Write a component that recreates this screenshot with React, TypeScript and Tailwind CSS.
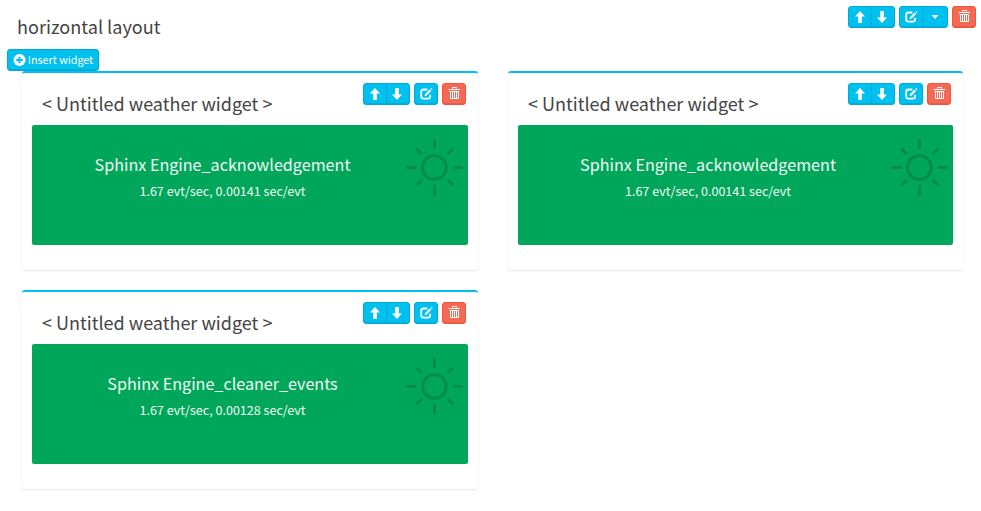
import type { ReactNode } from "react";

const font = "font-['Noto_Sans_CJK_SC','Noto_Sans',sans-serif]";

function Arrow({ down = false }: { down?: boolean }) {
  return (
    <svg width="12" height="12" viewBox="0 0 12 12" className={down ? "rotate-180" : ""}>
      <path d="M6 0L11 5.5H7.8V12H4.2V5.5H1Z" fill="white" />
    </svg>
  );
}

function Edit() {
  return (
    <svg width="13" height="12" viewBox="0 0 13 12" fill="none">
      <path d="M7.4 1.5H3.6Q1.2 1.5 1.2 3.9V8.3Q1.2 10.7 3.6 10.7H7.7Q10.1 10.7 10.1 8.3V6.8" stroke="white" strokeWidth="1.8" />
      <path d="M4.5 8.1L5.2 5.9L9.6 1.5L11.1 3L6.7 7.4Z" fill="white" />
      <path d="M10.4 0.8L11.1 0.1L12.6 1.6L11.9 2.3Z" fill="white" />
    </svg>
  );
}

function Trash() {
  return (
    <svg width="12" height="14" viewBox="0 0 12 14" fill="none" stroke="white" className="-mt-0.5">
      <path d="M4.5 2.5V1.5H8.5V2.5M0.5 3.5H12" />
      <path d="M1.5 5.5H11M2.5 5V12.5H10.5V5M4.5 5V12M6.5 5V12M8.5 5V12" />
    </svg>
  );
}

function Button({ color = "blue", className = "", children }: { color?: "blue" | "red"; className?: string; children: ReactNode }) {
  const tone = color === "blue" ? "border-[#00acd6] bg-[#00c0ef]" : "border-[#f4543c] bg-[#f56954]";
  return (
    <button className={`flex h-[22px] items-center justify-center border shadow-[inset_0_-1px_0_rgba(0,0,0,0.09)] ${tone} ${className}`}>
      {children}
    </button>
  );
}

function Tools({ menu = false }: { menu?: boolean }) {
  return (
    <div className="flex gap-1">
      <div className="flex">
        <Button className="w-6 rounded-l-[3px]"><Arrow /></Button>
        <Button className="-ml-px w-6 rounded-r-[3px] pr-0.5"><Arrow down /></Button>
      </div>
      <div className="flex">
        <Button className={menu ? "w-6 rounded-l-[3px]" : "w-6 rounded-[3px]"}><Edit /></Button>
        {menu && (
          <Button className="-ml-px w-[26px] rounded-r-[3px]">
            <svg width="8" height="4" viewBox="0 0 8 4"><path d="M0.5 0H7.5L4 4Z" fill="white" /></svg>
          </Button>
        )}
      </div>
      <Button color="red" className="w-6 rounded-[3px]"><Trash /></Button>
    </div>
  );
}

function Sun() {
  return (
    <svg width="58" height="58" viewBox="0 0 58 58" fill="none" stroke="#000" strokeOpacity="0.15" strokeWidth="3">
      <circle cx="29.4" cy="29.4" r="11.9" />
      <path d="M29.5 1V11M29.5 47V57.8M1 29.5H11.7M48.3 29.5H57.5M11.5 10.7L17 16M42.5 16L48.2 10.7M11.5 47.2L17 41.8M42.5 41.8L48.2 47.2" />
    </svg>
  );
}

function Card({ name, rate }: { name: string; rate: string }) {
  return (
    <section className="h-[199px] rounded-[3px] border-t-2 border-[#00c0ef] bg-white px-2.5 shadow-[0_1px_2px_rgba(0,0,0,0.1)]">
      <header className="flex h-[52px] items-start justify-between pt-2.5 pr-0.5 pl-2.5">
        <h3 className="pt-[7px] text-[18px] leading-[26px] whitespace-nowrap">&lt; Untitled weather widget &gt;</h3>
        <Tools />
      </header>
      <div className="flex h-[120px] justify-between rounded-[2px] bg-[#00a65a] pr-[5px] text-[#f1faf5]">
        <div className="flex w-[373px] flex-col items-center pt-[26px] pl-2">
          <h4 className="text-[16.15px] leading-[26px] whitespace-nowrap">{name}</h4>
          <p className="pt-1 text-[12.55px] leading-5 whitespace-nowrap">{rate}</p>
        </div>
        <div className="pt-[13px]"><Sun /></div>
      </div>
    </section>
  );
}

export default function App() {
  return (
    <main className={`h-[511px] overflow-hidden bg-white text-[#444] ${font}`}>
      <header className="flex h-[49px] items-start justify-between pt-1.5 pr-[5px] pl-[17px]">
        <h2 className="pt-[7px] text-[18.1px] leading-[26px] whitespace-nowrap">horizontal layout</h2>
        <Tools menu />
      </header>
      <div className="pl-[7px]">
        <Button className="w-[92px] gap-0.5 rounded-[3px] text-white">
          <svg width="13" height="13" viewBox="0 0 13 13">
            <circle cx="6.5" cy="6" r="6" fill="white" />
            <path d="M6.5 2.7V9.3M3.2 6H9.8" stroke="#00c0ef" strokeWidth="2" />
          </svg>
          <span className="text-[10.75px] leading-5 whitespace-nowrap">Insert widget</span>
        </Button>
      </div>
      <div className="grid grid-cols-[456px_455px] gap-x-[30px] gap-y-5 pl-[22px]">
        <Card name="Sphinx Engine_acknowledgement" rate="1.67 evt/sec, 0.00141 sec/evt" />
        <Card name="Sphinx Engine_acknowledgement" rate="1.67 evt/sec, 0.00141 sec/evt" />
        <Card name="Sphinx Engine_cleaner_events" rate="1.67 evt/sec, 0.00128 sec/evt" />
      </div>
    </main>
  );
}
